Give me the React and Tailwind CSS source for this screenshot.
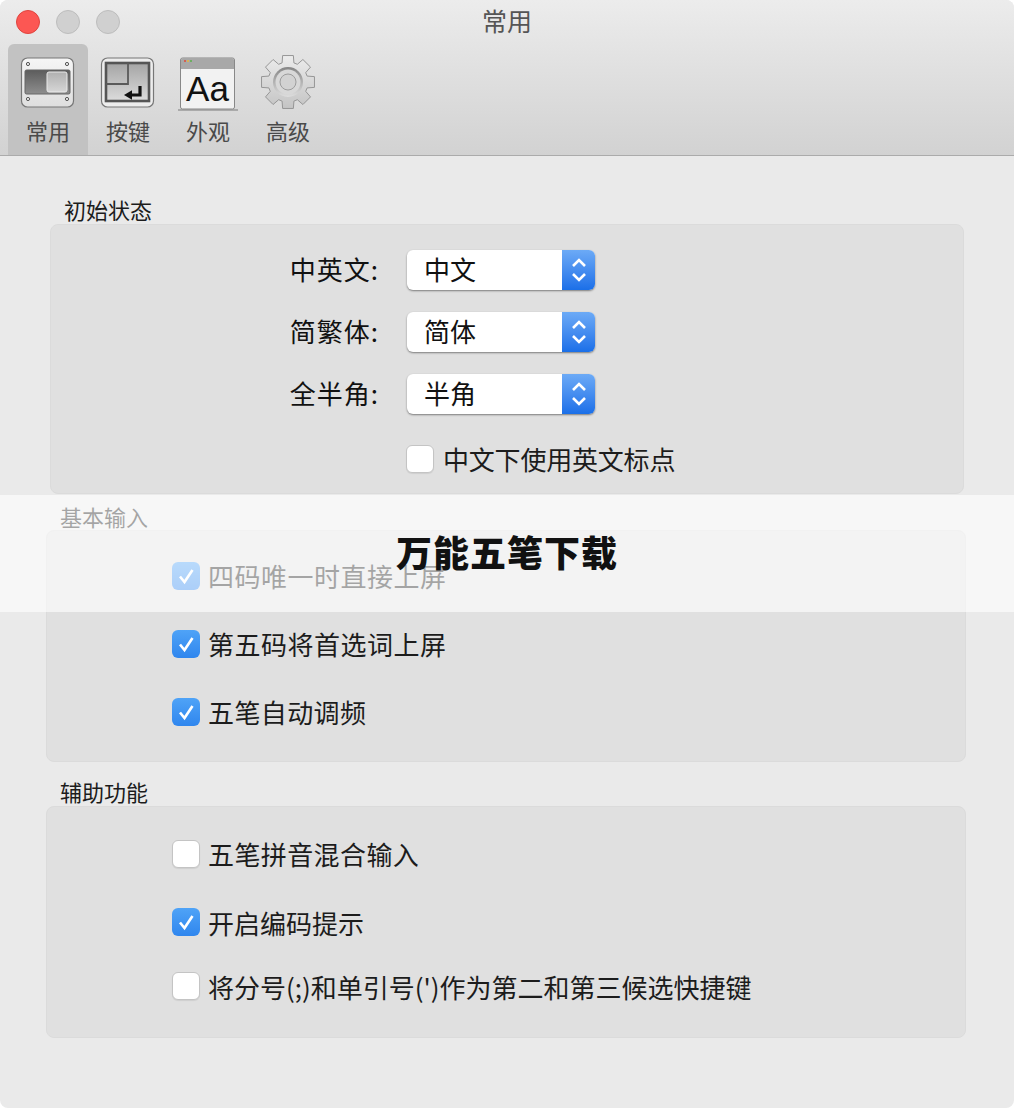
import React from 'react';

const CheckMark = () => (
  <svg viewBox="0 0 28 28" className="w-7 h-7">
    <path d="M8 14.5l4.5 5.5L20.5 8" fill="none" stroke="#fff" strokeWidth="2.6" />
  </svg>
);

function Checkbox({ checked, label, className = '', textClass = '' }) {
  return (
    <div className={`flex items-center h-7 ${className}`}>
      {checked ? (
        <div className="w-7 h-7 shrink-0 rounded-md bg-gradient-to-b from-[#4fa3f7] to-[#2f86ee]">
          <CheckMark />
        </div>
      ) : (
        <div className="w-7 h-7 shrink-0 rounded-md bg-white border border-[#c4c4c4] shadow-[0_1px_1px_rgba(0,0,0,0.08)]" />
      )}
      <span className={`ml-[8px] text-[26px] leading-none whitespace-nowrap text-[#1c1c1c] ${textClass}`}>{label}</span>
    </div>
  );
}

function SelectRow({ label, value, className = '' }) {
  return (
    <div className={`flex items-center h-10 ${className}`}>
      <span className="w-[356px] pr-[28px] text-right text-[26px] leading-none tracking-[1px] text-[#111] -translate-y-px">{label}</span>
      <div className="w-[188px] h-10 flex rounded-md overflow-hidden bg-white shadow-[0_1px_2px_rgba(0,0,0,0.45)]">
        <span className="flex-1 pl-[17px] text-[26px] leading-[38px] text-[#111]">{value}</span>
        <div className="w-[33px] flex items-center justify-center bg-gradient-to-b from-[#6caaf6] to-[#1a6fe8]">
          <svg viewBox="0 0 20 32" className="w-5 h-8">
            <path d="M4 12l6-6 6 6M4 20l6 6 6-6" fill="none" stroke="#fff" strokeWidth="2.6" />
          </svg>
        </div>
      </div>
    </div>
  );
}

const GeneralIcon = () => (
  <svg viewBox="0 0 56 52" className="w-14 h-[52px]">
    <defs>
      <linearGradient id="genFace" x1="0" y1="0" x2="0" y2="1">
        <stop offset="0" stopColor="#f6f6f6" />
        <stop offset="1" stopColor="#dedede" />
      </linearGradient>
      <linearGradient id="genDark" x1="0" y1="0" x2="0" y2="1">
        <stop offset="0" stopColor="#5c5c5c" />
        <stop offset="1" stopColor="#8e8e8e" />
      </linearGradient>
      <linearGradient id="genKnob" x1="0" y1="0" x2="0" y2="1">
        <stop offset="0" stopColor="#b0b0b0" />
        <stop offset="1" stopColor="#d6d6d6" />
      </linearGradient>
    </defs>
    <rect x="1.5" y="1" width="52" height="49" rx="6" fill="url(#genFace)" stroke="#777" strokeWidth="1.2" />
    <circle cx="8" cy="7" r="1.6" fill="#eee" stroke="#555" />
    <circle cx="47" cy="7" r="1.6" fill="#eee" stroke="#555" />
    <circle cx="8" cy="42" r="1.6" fill="#eee" stroke="#555" />
    <circle cx="47" cy="42" r="1.6" fill="#eee" stroke="#555" />
    <rect x="5" y="13" width="45" height="24" rx="1.5" fill="url(#genDark)" stroke="#666" />
    <rect x="27" y="15" width="20" height="20" rx="2" fill="url(#genKnob)" stroke="#eaeaea" />
  </svg>
);

const KeysIcon = () => (
  <svg viewBox="0 0 56 52" className="w-14 h-[52px]">
    <defs>
      <linearGradient id="keyFill" x1="0" y1="0" x2="0" y2="1">
        <stop offset="0" stopColor="#a4a4a4" />
        <stop offset="1" stopColor="#dcdcdc" />
      </linearGradient>
    </defs>
    <rect x="1.5" y="1" width="52" height="49" rx="6" fill="#ededed" stroke="#777" strokeWidth="1.2" />
    <rect x="6" y="6" width="43" height="38" fill="url(#keyFill)" stroke="#555" strokeWidth="2.6" />
    <path d="M28 6v21H6" fill="none" stroke="#5a5a5a" strokeWidth="1.8" />
    <path d="M40 29v9H32" fill="none" stroke="#111" strokeWidth="3.2" />
    <path d="M24 38l8-4.8v9.6z" fill="#111" />
  </svg>
);

const LookIcon = () => (
  <svg viewBox="0 0 60 56" className="w-[60px] h-14">
    <rect x="0" y="52" width="60" height="2" fill="#aaa" />
    <rect x="2.5" y="1" width="54" height="51" rx="2" fill="#f2f2f2" stroke="#888" />
    <path d="M3 12V3a2 2 0 0 1 2-2h49a2 2 0 0 1 2 2v9z" fill="#a8a8a8" />
    <circle cx="7" cy="4" r="1" fill="#e04a3a" />
    <circle cx="10" cy="4" r="1" fill="#e8b83a" />
    <circle cx="13" cy="4" r="1" fill="#5ab04a" />
    <text x="29.5" y="44" textAnchor="middle" fontSize="35" fill="#111" fontFamily="'Liberation Sans', sans-serif">Aa</text>
  </svg>
);

// 8-tooth cog outline
const gearPath = () => {
  const pt = (r, a) => `${(28 + r * Math.cos(a)).toFixed(2)} ${(28 + r * Math.sin(a)).toFixed(2)}`;
  let d = '';
  for (let i = 0; i < 8; i++) {
    const c = (i * Math.PI) / 4 - Math.PI / 2;
    d += `${i === 0 ? 'M' : 'L'}${pt(20, c - 0.3)}L${pt(27, c - 0.2)}L${pt(27, c + 0.2)}L${pt(20, c + 0.3)}`;
  }
  return d + 'Z';
};

const GearIcon = () => (
  <svg viewBox="0 0 56 56" className="w-14 h-14">
    <defs>
      <linearGradient id="gearFill" x1="0" y1="0" x2="0" y2="1">
        <stop offset="0" stopColor="#ececec" />
        <stop offset="1" stopColor="#c4c4c4" />
      </linearGradient>
      <linearGradient id="gearRing" x1="0" y1="0" x2="0" y2="1">
        <stop offset="0" stopColor="#858585" />
        <stop offset="1" stopColor="#dedede" />
      </linearGradient>
    </defs>
    <path d={gearPath()} fill="url(#gearFill)" stroke="#969696" strokeWidth="1" strokeLinejoin="round" />
    <circle cx="28" cy="28" r="15" fill="url(#gearRing)" />
    <circle cx="28" cy="28" r="12.5" fill="#d8d8d8" />
    <circle cx="28" cy="28" r="8" fill="#d2d2d2" stroke="#9c9c9c" />
  </svg>
);

function Tab({ label, active, iconClass = 'pt-[13px]', children }) {
  return (
    <div className={`w-20 flex flex-col items-center rounded-t-md ${active ? 'bg-[#c2c2c2]' : ''}`}>
      <div className={`h-[72px] ${iconClass}`}>{children}</div>
      <span className="text-[22px] leading-[28px] text-[#4a4a4a]">{label}</span>
    </div>
  );
}

export default function App() {
  return (
    <div className="relative w-[1014px] h-[1108px] overflow-hidden rounded-lg bg-[#eaeaea] font-['Noto_Sans_CJK_SC','Noto_Sans',sans-serif]">
      {/* Title bar */}
      <div className="h-[156px] border-b border-[#ababab] bg-gradient-to-b from-[#ececec] to-[#d2d2d2]">
        <div className="relative h-11 flex items-center pl-4 gap-4">
          <div className="w-6 h-6 rounded-full bg-[#fc5753] border border-[#e0443e]" />
          <div className="w-6 h-6 rounded-full bg-[#d0d0d0] border border-[#bdbdbd]" />
          <div className="w-6 h-6 rounded-full bg-[#d0d0d0] border border-[#bdbdbd]" />
          <span className="absolute left-0 right-0 top-[3px] text-center text-[25px] leading-[34px] text-[#555]">常用</span>
        </div>
        <div className="h-[111px] flex pl-2">
          <Tab label="常用" active><GeneralIcon /></Tab>
          <Tab label="按键"><KeysIcon /></Tab>
          <Tab label="外观"><LookIcon /></Tab>
          <Tab label="高级" iconClass="pt-[10px]"><GearIcon /></Tab>
        </div>
      </div>

      {/* 初始状态 */}
      <div className="mt-[41px] mb-[3px] ml-[64px] text-[22px] leading-6 text-[#1c1c1c]">初始状态</div>
      <div className="ml-[50px] w-[914px] h-[270px] rounded-lg border border-[#dbdbdb] bg-[#e0e0e0] pt-[25px]">
        <SelectRow label="中英文:" value="中文" />
        <SelectRow label="简繁体:" value="简体" className="mt-[22px]" />
        <SelectRow label="全半角:" value="半角" className="mt-[22px]" />
        <Checkbox label="中文下使用英文标点" textClass="ml-[9px] tracking-[-0.2px]" className="mt-[31px] ml-[355px]" />
      </div>

      {/* 基本输入 */}
      <div className="mt-[10px] mb-[2px] ml-[60px] text-[22px] leading-6 text-[#1c1c1c]">基本输入</div>
      <div className="ml-[46px] w-[920px] h-[232px] rounded-lg border border-[#dbdbdb] bg-[#e0e0e0] pt-[31px] pl-[125px]">
        <Checkbox checked label="四码唯一时直接上屏" textClass="tracking-[0.5px]" />
        <Checkbox checked label="第五码将首选词上屏" textClass="tracking-[0.5px]" className="mt-10" />
        <Checkbox checked label="五笔自动调频" textClass="tracking-[0.4px]" className="mt-10" />
      </div>

      {/* 辅助功能 */}
      <div className="mt-[17px] mb-[3px] ml-[60px] text-[22px] leading-6 text-[#1c1c1c]">辅助功能</div>
      <div className="ml-[46px] w-[920px] h-[232px] rounded-lg border border-[#dbdbdb] bg-[#e0e0e0] pt-[33px] pl-[125px]">
        <Checkbox label="五笔拼音混合输入" textClass="tracking-[0.4px]" />
        <Checkbox checked label="开启编码提示" className="mt-10" textClass="translate-y-[1px]" />
        <Checkbox label="将分号(;)和单引号(')作为第二和第三候选快捷键" textClass="translate-y-[1px]" className="mt-9" />
      </div>

      {/* Watermark band */}
      <div className="absolute left-0 right-0 top-[495px] h-[117px] bg-white/60 flex justify-center pt-[33px]">
        <span className="text-[36px] leading-[46px] tracking-[1px] font-black text-[#111]">万能五笔下载</span>
      </div>
    </div>
  );
}
